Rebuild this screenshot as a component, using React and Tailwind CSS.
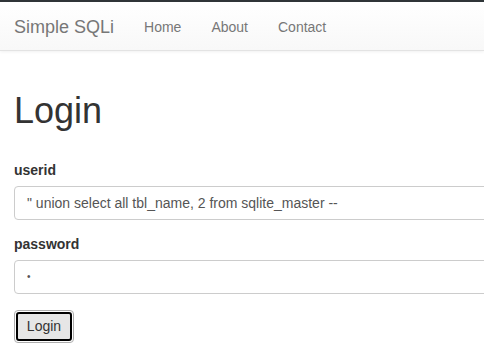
export default function App() {
  return (
    <div className="h-[361px] w-[484px] overflow-hidden bg-white font-['Liberation_Sans',Arial,sans-serif] text-[14px] text-[#333]">
      {/* NAVBAR */}
      <nav className="flex h-[51px] items-center border-t-2 border-t-[#2f3538] border-b border-b-[#e3e3e3] bg-gradient-to-b from-white to-[#f8f8f8] pt-[2px] shadow-[0_1px_3px_rgba(0,0,0,0.06)]">
        <span className="ml-[14px] text-[18px] text-[#777]">Simple SQLi</span>
        <span className="ml-[30px] text-[#777]">Home</span>
        <span className="ml-[30px] text-[#777]">About</span>
        <span className="ml-[30px] text-[#777]">Contact</span>
      </nav>

      {/* FORM */}
      <div className="pl-[14px]">
        <h1 className="mt-[38px] text-[36px] leading-[44px] text-[#333]">Login</h1>

        <label className="mt-[27px] block font-bold leading-[20px]">userid</label>
        <div className="mt-[6px] flex h-[34px] w-[520px] items-center rounded-[4px] border border-[#ccc] px-[12px] text-[#555]">
          " union select all tbl_name, 2 from sqlite_master --
        </div>

        <label className="mt-[14px] block font-bold leading-[20px]">password</label>
        <div className="mt-[6px] flex h-[34px] w-[520px] items-center rounded-[4px] border border-[#ccc] px-[12px] text-[#555]">
          <span className="text-[10px] leading-none">•</span>
        </div>

        <button className="mt-[16px] flex h-[33px] w-[60px] items-center justify-center rounded-[4px] border border-[#adadad] p-[1px]">
          <span className="flex h-full w-full items-center justify-center rounded-[3px] border-2 border-black bg-[#e6e6e6] text-[#333]">
            Login
          </span>
        </button>
      </div>
    </div>
  );
}
